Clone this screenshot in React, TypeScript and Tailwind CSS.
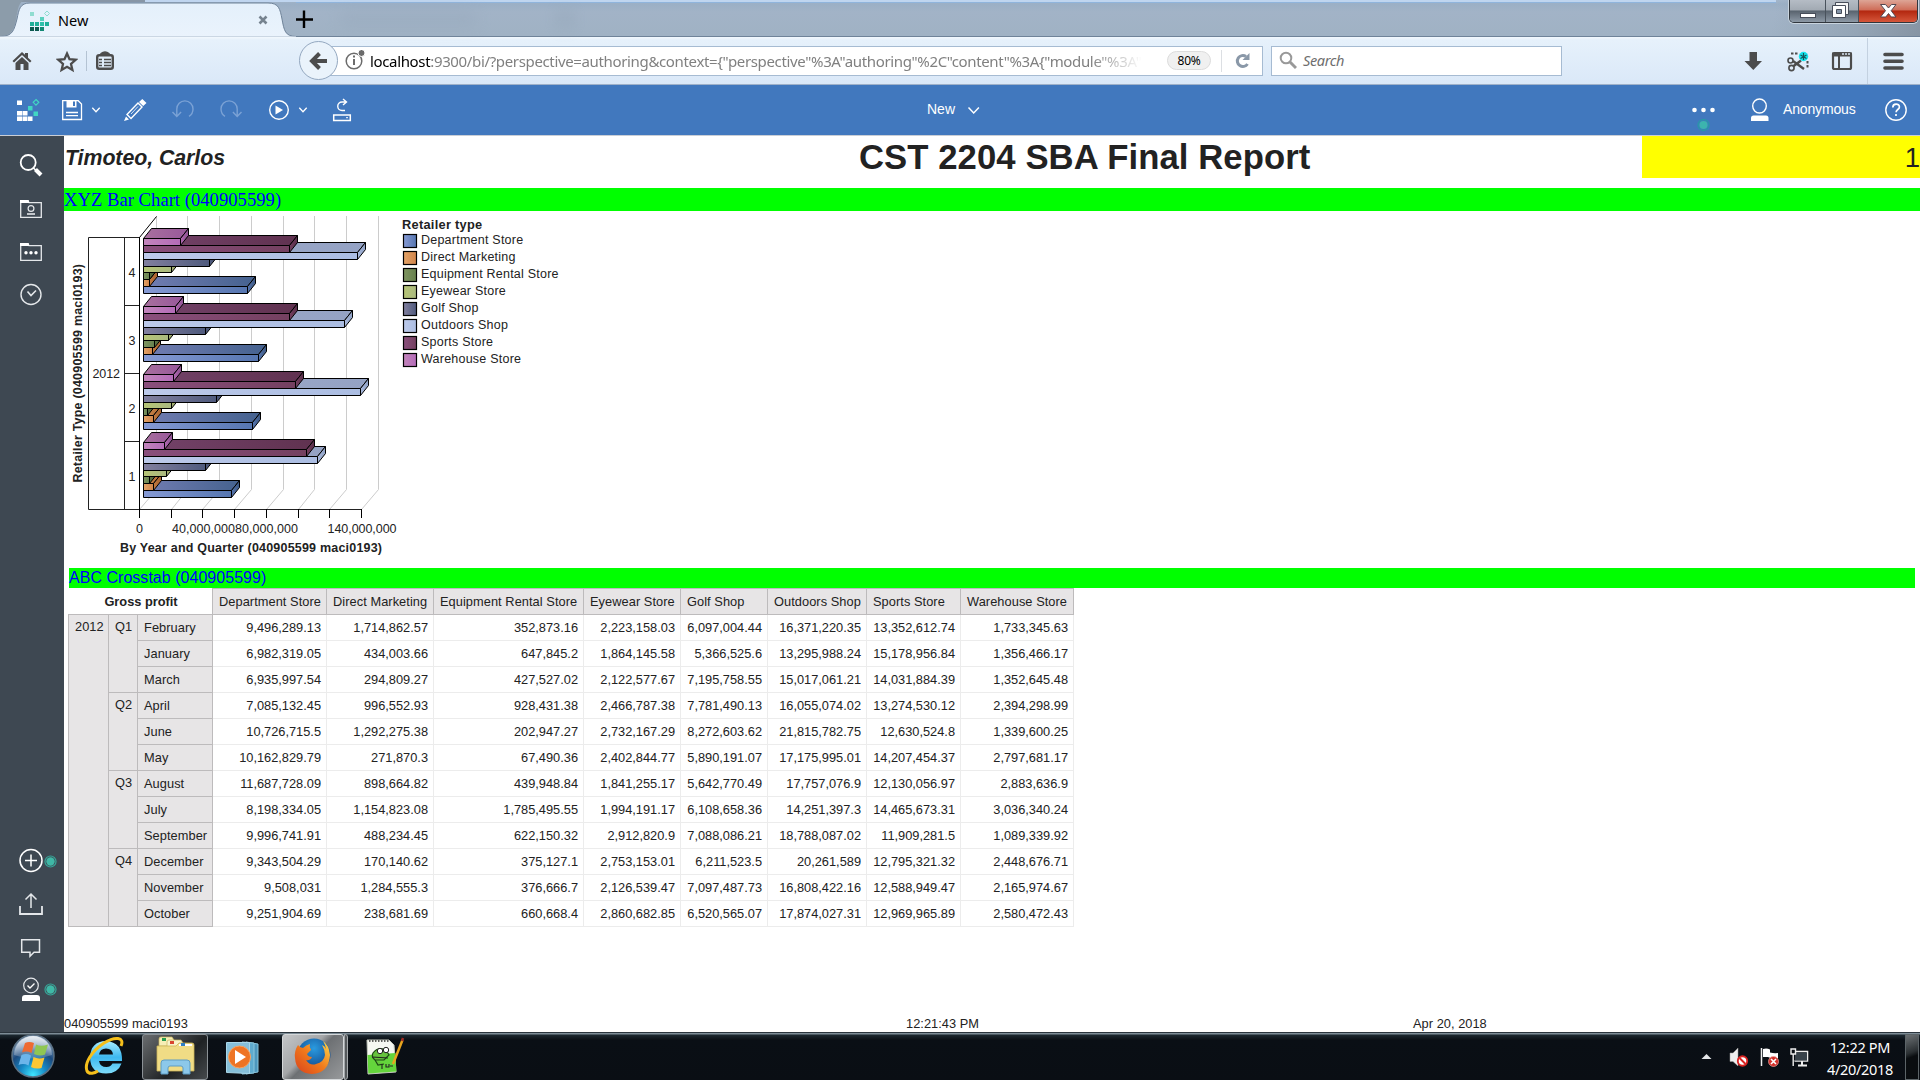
import React from "react";

type IcoProps = { x: number; y: number; w: number; h: number; className?: string; children: React.ReactNode };

function Ico({ x, y, w, h, className = "", children }: IcoProps) {
  return (
    <svg width={w} height={h} viewBox={`${x} ${y} ${w} ${h}`} fill="none" className={`block shrink-0 ${className}`}>
      {children}
    </svg>
  );
}

/* ---------- Browser chrome ---------- */

function TabStrip() {
  return (
    <div className="flex h-[37px] bg-[linear-gradient(#a3b5ca_0,#9bafc5_4px,#a2b3c7_12px,#a0b2c4_34px)]">
      <div className="relative h-[37px] w-[296px] shrink-0">
        <svg className="absolute inset-0" width="296" height="37" viewBox="0 0 296 37">
          <defs>
            <linearGradient id="tab" x1="0" y1="0" x2="0" y2="1">
              <stop offset="0" stopColor="#e4f0fb" />
              <stop offset="1" stopColor="#eaf3fc" />
            </linearGradient>
          </defs>
          <rect x="0" y="0" width="145" height="2" fill="#8796a6" />
          <path d="M0 0H24C17 4 18 12 15 24C12 34 8 36 0 36Z" fill="#8c9caa" />
          <path d="M0 37V36.500C13 36.500 14 30 17 19C19 9 20 3 30 3H268C279 3 280 9 282 19C284 30 285 36.500 296 36.500V37Z" fill="url(#tab)" stroke="#6f8399" />
          <rect x="145" y="0" width="151" height="2" fill="#bfd5ef" />
          <rect x="0" y="36.500" width="296" height="1" fill="#eaf3fc" />
        </svg>
        <div className="relative flex h-[37px] items-center pt-1 font-['Noto_Sans',sans-serif] text-[14px] text-black">
          <Ico x={30} y={9} w={20} h={22} className="ml-[30px]">
            <path d="M30 11h4v4h-4z" fill="#8fdcd0" />
            <path d="M47 10l2.500 2.500-2.500 2.500-2.500-2.500z" stroke="#8fdcd0" strokeWidth="1" />
            <path d="M40 16h4v4h-4z" fill="#5ad0bd" />
            <path d="M30 21h4v4h-4zM35 21h4v4h-4zM45 21h4v4h-4z" fill="#1fae98" />
            <path d="M40 21h4v4h-4z" fill="#2fc0aa" />
            <path d="M30 26h4v4h-4zM35 26h4v4h-4z" fill="#0c5a50" />
            <path d="M40 26h4v4h-4z" fill="#138873" />
          </Ico>
          <span className="ml-[8px] text-[14.500px]">New</span>
          <Ico x={258} y={15} w={10} h={10} className="ml-auto mr-[28px] mb-px">
            <path d="M259.500 16.500l7 7M266.500 16.500l-7 7" stroke="#76838f" strokeWidth="2.600" />
          </Ico>
        </div>
      </div>
      <div className="relative flex-1 border-b border-[#6f8399]">
        <div className="absolute left-0 top-0 h-[3px] w-[1480px] border-b border-[#8fb4dc] bg-[#bfd5ef]" />
        <svg className="absolute left-0 top-[10px]" width="20" height="20" viewBox="0 0 20 20">
          <path d="M8 0.500V18M-1 9.500H17" stroke="#000" strokeWidth="2.400" />
        </svg>
        <div className="absolute left-[44px] top-[11px] h-4 w-[136px] bg-[#8fa2b5] opacity-30 blur-sm" />
        <div className="absolute left-[263px] top-[11px] h-4 w-3 bg-[#8497aa] opacity-40 blur-sm" />
        <div className="absolute right-0 top-0 h-[36px] w-[160px] bg-[linear-gradient(100deg,transparent_10%,#8a99a8_60%,#6d7782)] opacity-50" />
        <div className="absolute right-[2px] top-0 flex h-[23px] w-[129px] overflow-hidden rounded-b-[5px] border border-t-0 border-[#30363d] shadow-[0_0_0_1px_#c9d4de]">
          <div className="h-full w-[36px] border-r border-[#49525c] bg-[linear-gradient(#b5bcc5_0,#a2aab3_45%,#59636e_50%,#8d99a6)]">
            <svg width="35" height="22" viewBox="0 0 35 22"><rect x="10.500" y="13.500" width="15" height="4" fill="#fff" stroke="#474d59" /></svg>
          </div>
          <div className="h-full w-[33px] border-r border-[#49525c] bg-[linear-gradient(#b5bcc5_0,#a2aab3_45%,#59636e_50%,#8d99a6)]">
            <svg width="32" height="22" viewBox="0 0 32 22">
              <path d="M9.500 2.500h13v12h-13z" fill="#f4f4f4" stroke="#474d59" />
              <path d="M6.500 5.500h13v12h-13z" fill="#fff" stroke="#474d59" />
              <path d="M10.500 9.500h5v4h-5z" fill="#8595a8" stroke="#474d59" />
            </svg>
          </div>
          <div className="h-full flex-1 bg-[linear-gradient(#dda596_0,#cf6d58_45%,#b3270f_50%,#d5563a)]">
            <svg width="59" height="22" viewBox="0 0 59 22">
              <path d="M21.500 4.500h5l3 3.500 3-3.500h4.500l-4.800 6.200 4.800 6.300h-4.800l-2.700-3.500-2.700 3.500h-5.300l5-6.300z" fill="#fff" stroke="#524750" />
            </svg>
          </div>
        </div>
      </div>
    </div>
  );
}

function NavBar() {
  return (
    <div className="flex h-[48px] items-center border-b border-[#9fb1c9] bg-[linear-gradient(#f2f8fd_0,#e6f1fb_3px,#dae8f8)] font-['Noto_Sans',sans-serif]">
      <Ico x={12} y={37} w={20} h={48} className="ml-[12px]">
        <path d="M22 52l-9.500 9 1.500 1.500 8-7.500 8 7.500 1.500-1.500-3.500-3.300V53h-3v1.700z" fill="#4c4c4c" />
        <path d="M15.500 63l6.500-6 6.500 6v7h-5v-6h-3v6h-5z" fill="#4c4c4c" />
      </Ico>
      <Ico x={56} y={37} w={22} h={48} className="ml-[24px]">
        <path d="M67 53.500l2.500 5.700 6.200.6-4.700 4.100 1.400 6.100-5.400-3.200-5.400 3.200 1.400-6.100-4.700-4.100 6.200-.6z" stroke="#4c4c4c" strokeWidth="2.300" />
      </Ico>
      <div className="ml-[8px] h-[20px] w-px bg-[#b4c3d3]" />
      <Ico x={95} y={37} w={20} h={48} className="ml-[8px]">
        <path d="M101 55v-1.500q4-3 8 0V55" fill="#4c4c4c" stroke="#4c4c4c" strokeWidth="1.500" />
        <rect x="97.200" y="55.200" width="15.600" height="13.600" rx="2" stroke="#4c4c4c" strokeWidth="2.400" />
        <path d="M99 59.500h3M104 59.500h7M99 62.500h3M104 62.500h7M99 65.500h3M104 65.500h7" stroke="#4c4c4c" strokeWidth="1.500" />
      </Ico>
      <div className="relative z-10 ml-[184px] flex size-[39px] shrink-0 items-center justify-center rounded-full border border-[#94a8c0] bg-[#eaf3fb]">
        <svg width="20" height="20" viewBox="0 0 20 20" fill="none"><path d="M18 10H4M10.500 2.500L3 10l7.500 7.500" stroke="#4c4c4c" strokeWidth="4" /></svg>
      </div>
      <div className="-ml-[10px] flex h-[30px] w-[935px] shrink-0 items-center border border-[#a6bbd2] bg-white">
        <Ico x={344} y={51} w={20} h={22} className="ml-[16px]">
          <circle cx="353" cy="62" r="7.800" stroke="#6b6b6b" strokeWidth="1.500" />
          <path d="M353 60v6M353 56.500v2" stroke="#6b6b6b" strokeWidth="2" />
          <circle cx="360.500" cy="54" r="3.500" fill="#6b6b6b" stroke="#fff" />
        </Ico>
        <div className="ml-[5px] w-[782px] overflow-hidden whitespace-nowrap pt-px text-[15px] tracking-[-0.350px] text-[#808080] [mask-image:linear-gradient(90deg,#000_720px,transparent_772px)]">
          <span className="text-black">localhost</span>{':9300/bi/?perspective=authoring&context={"perspective"%3A"authoring"%2C"content"%3A{"module"%3A"'}
        </div>
        <div className="ml-[15px] flex h-[19px] w-[44px] items-center justify-center rounded-full border border-[#dcdcdc] bg-[#f0f0f0] text-[12px] tracking-[-0.300px] text-black">80%</div>
        <div className="ml-[10px] h-[22px] w-px bg-[#dcdfe3]" />
        <Ico x={1233} y={53} w={18} h={18} className="ml-[11px]">
          <path d="M1246 57.500A5.500 5.500 0 1 0 1247.500 65" stroke="#8a98a8" strokeWidth="3" />
          <path d="M1249.500 54v7h-7z" fill="#8a98a8" />
        </Ico>
      </div>
      <div className="ml-[8px] flex h-[30px] w-[291px] shrink-0 items-center border border-[#a6bbd2] bg-white">
        <Ico x={1279} y={51} w={18} h={20} className="ml-[7px]">
          <circle cx="1286" cy="58" r="5.300" stroke="#999" strokeWidth="2" />
          <path d="M1290 62l6 6" stroke="#999" strokeWidth="3" />
        </Ico>
        <span className="ml-[6px] pt-px text-[14.500px] italic tracking-[-0.350px] text-[#6e6e6e]">Search</span>
      </div>
      <Ico x={1744} y={37} w={19} h={48} className="ml-[182px]">
        <path d="M1749.500 52h7.500v9h5l-8.700 9-8.800-9h5z" fill="#4c4c4c" />
      </Ico>
      <Ico x={1787} y={37} w={24} h={48} className="ml-[24px]">
        <circle cx="1790.500" cy="60.500" r="2.500" stroke="#4c4c4c" strokeWidth="1.600" />
        <circle cx="1791.500" cy="68" r="2.600" stroke="#4c4c4c" strokeWidth="1.600" />
        <path d="M1793 61l11 8M1793 66.500l8-6" stroke="#4c4c4c" strokeWidth="2.400" />
        <path d="M1791 53.500h7M1807.500 61v8" stroke="#4c4c4c" strokeWidth="2" strokeDasharray="2.500 1.500" />
        <circle cx="1803.500" cy="56.500" r="4.700" fill="#15e4ec" />
        <path d="M1803.500 53v7M1800.500 55l6 3.500M1806.500 55l-6 3.500" stroke="#14555a" strokeWidth="1.200" />
      </Ico>
      <Ico x={1831} y={37} w={22} h={48} className="ml-[20px]">
        <rect x="1833" y="53" width="18" height="16" rx="1.500" stroke="#4c4c4c" strokeWidth="2.200" />
        <path d="M1832 52.500h20v4h-20z" fill="#4c4c4c" />
        <path d="M1842 54h2M1845 54h2M1848 54h2" stroke="#d6e4f2" strokeWidth="1.300" />
        <path d="M1839 56v12" stroke="#4c4c4c" strokeWidth="2" />
      </Ico>
      <div className="ml-[14px] h-[46px] w-px bg-[#c3d1e0]" />
      <Ico x={1883} y={37} w={22} h={48} className="ml-[14px]">
        <path d="M1886 54.500h17M1886 61.300h17M1886 68h17" stroke="#4c4c4c" strokeWidth="3.600" strokeLinecap="round" />
      </Ico>
    </div>
  );
}

/* ---------- Cognos toolbar ---------- */

function AppBar() {
  return (
    <div className="flex h-[51px] items-start border-b border-[#c9ced6] bg-[#4178be] font-['Liberation_Sans',sans-serif] text-[14px] text-white">
      <div className="flex w-[927px] shrink-0">
        <Ico x={16} y={85} w={24} h={50} className="ml-[16px]">
          <path d="M17 100.500h5v4.500h-5zM17 111h5v4.500h-5zM17 116.500h5v4.500h-5zM22.500 111h5v4.500h-5zM22.500 116.500h5v4.500h-5zM28 116.500h4.500v4.500H28z" fill="#fff" />
          <path d="M28 106h4.500v4.500H28zM33.500 111.500H38v4.500h-4.500z" fill="#41d6c3" />
          <path d="M36 99.500l2.800 2.800-2.800 2.800-2.800-2.800z" stroke="#41d6c3" strokeWidth="1.200" />
        </Ico>
        <Ico x={61} y={85} w={22} h={50} className="ml-[21px]">
          <path d="M62.700 100.700h15.500l3.300 3.300v15.500H62.700z" stroke="#fff" strokeWidth="1.300" />
          <path d="M66.500 100.500h10v7h-10z" fill="#fff" />
          <path d="M73 101.500h2v4.500h-2z" fill="#4178be" />
          <path d="M66 112.500h12M66 115.700h12" stroke="#fff" strokeWidth="1.300" />
        </Ico>
        <Ico x={91} y={85} w={10} h={50} className="ml-[8px]"><path d="M92.300 107.800l3.700 3.900 3.700-3.900" stroke="#fff" strokeWidth="1.300" /></Ico>
        <Ico x={123} y={85} w={24} h={50} className="ml-[22px]">
          <path d="M127 114.500l11-11.500 4 4L131 118.500z" stroke="#fff" strokeWidth="1.400" />
          <path d="M139 102l3.300-3 4.200 4-3.300 3zM126 116.500l3 3-5 1.500z" fill="#fff" />
          <path d="M131 114l7-7.500" stroke="#fff" strokeWidth="0.800" />
        </Ico>
        <Ico x={171} y={85} w={24} h={50} className="ml-[24px]">
          <path d="M172.500 112l4.300 4.500 4.300-4.500M176.800 116V109a8 8 0 0 1 16.200 0c0 3-1 5.500-4 7.300" stroke="#7ba2d5" strokeWidth="1.400" />
        </Ico>
        <Ico x={219} y={85} w={24} h={50} className="ml-[24px]">
          <path d="M241.500 112l-4.300 4.500-4.300-4.500M237.200 116V109a8 8 0 0 0-16.200 0c0 3 1 5.500 4 7.300" stroke="#7ba2d5" strokeWidth="1.400" />
        </Ico>
        <Ico x={268} y={85} w={22} h={50} className="ml-[25px]">
          <circle cx="279" cy="110" r="9.300" stroke="#fff" strokeWidth="1.400" />
          <path d="M275.500 105.500v9l7.500-4.500z" fill="#fff" />
        </Ico>
        <Ico x={298} y={85} w={10} h={50} className="ml-[8px]"><path d="M299.300 107.800l3.700 3.900 3.700-3.900" stroke="#fff" strokeWidth="1.300" /></Ico>
        <Ico x={332} y={85} w={20} h={50} className="ml-[24px]">
          <path d="M345 110.500h-3a4 4 0 0 1 0-8.500h3.500M343 99l3.500 3-3.500 3" stroke="#fff" strokeWidth="1.400" />
          <path d="M333.700 115h16.600v5.500h-16.600z" stroke="#fff" strokeWidth="1.500" />
          <path d="M346 117.700h2" stroke="#fff" />
        </Ico>
      </div>
      <span className="leading-[49px]">New</span>
      <Ico x={967} y={85} w={14} h={50} className="ml-[12px]"><path d="M968.500 107.500l5.200 5.500 5.200-5.500" stroke="#fff" strokeWidth="1.500" /></Ico>
      <div className="ml-auto flex">
        <Ico x={1691} y={85} w={25} h={50}>
          <g fill="#fff"><circle cx="1694.500" cy="110" r="2.300" /><circle cx="1703.500" cy="110" r="2.300" /><circle cx="1712.500" cy="110" r="2.300" /></g>
          <circle cx="1703.500" cy="125" r="5.500" stroke="#2798a8" strokeWidth="1.300" />
          <circle cx="1703.500" cy="125" r="4.100" fill="#3cb4ae" />
        </Ico>
        <Ico x={1749} y={85} w={22} h={50} className="ml-[33px]">
          <ellipse cx="1759.500" cy="106" rx="6.800" ry="7" stroke="#fff" strokeWidth="1.400" />
          <path d="M1751 121v-3q0-2.500 2.500-2.500h12.500q2.500 0 2.500 2.500v3z" fill="#fff" />
        </Ico>
        <span className="ml-[12px] w-[73px] whitespace-nowrap text-[14px] leading-[49px] tracking-[-0.150px]">Anonymous</span>
        <Ico x={1884} y={85} w={24} h={50} className="ml-[28px] mr-[12px]">
          <circle cx="1896" cy="110" r="10.200" stroke="#fff" strokeWidth="1.400" />
          <path d="M1892.800 107.500c0-4.500 6.600-4.300 6.600-.6 0 2.600-3.300 2.600-3.300 5.300M1896 114v2" stroke="#fff" strokeWidth="1.700" />
        </Ico>
      </div>
    </div>
  );
}

function Teal() {
  return (
    <svg width="13" height="13" viewBox="0 0 13 13" fill="none" className="block shrink-0">
      <circle cx="6.500" cy="6.500" r="5.500" stroke="#36a598" strokeWidth="1.200" />
      <circle cx="6.500" cy="6.500" r="4.200" fill="#3fb8a6" />
    </svg>
  );
}

function SideBar() {
  return (
    <div className="flex w-[64px] shrink-0 flex-col items-start bg-[#3e4852]">
      <Ico x={18} y={152} w={26} h={26} className="ml-[18px] mt-[16px]">
        <circle cx="28.200" cy="162.500" r="7.500" stroke="#fff" strokeWidth="1.800" />
        <path d="M35.500 169.500l5.500 5.500" stroke="#fff" strokeWidth="4" />
        <path d="M33 167.500l3 3" stroke="#fff" strokeWidth="1.500" />
      </Ico>
      <Ico x={18} y={198} w={26} h={22} className="ml-[18px] mt-[20px]">
        <path d="M20.700 200.700v16.600h20.600v-14.600H29l-1-2z" stroke="#e4e7ea" strokeWidth="1.300" />
        <path d="M20 200h8.500l1 3H20z" fill="#fff" />
        <circle cx="31" cy="208.500" r="2.900" stroke="#e4e7ea" strokeWidth="1.200" />
        <path d="M27 214h8" stroke="#e4e7ea" strokeWidth="1.600" />
      </Ico>
      <Ico x={18} y={241} w={26} h={22} className="ml-[18px] mt-[21px]">
        <path d="M20.700 243.700v16.600h20.600v-14.600H29l-1-2z" stroke="#e4e7ea" strokeWidth="1.300" />
        <path d="M20 243h8.500l1 3H20z" fill="#fff" />
        <g fill="#fff"><circle cx="26" cy="252.700" r="1.700" /><circle cx="31" cy="252.700" r="1.700" /><circle cx="36" cy="252.700" r="1.700" /></g>
      </Ico>
      <Ico x={18} y={282} w={26} h={26} className="ml-[18px] mt-[19px]">
        <circle cx="31" cy="294.500" r="10" stroke="#e4e7ea" strokeWidth="1.400" />
        <path d="M27.500 291.500l3.500 4 5-5" stroke="#e4e7ea" strokeWidth="1.600" />
      </Ico>
      <div className="mt-auto flex items-center pl-[18px]">
        <Ico x={18} y={848} w={26} h={26}>
          <circle cx="31" cy="860.500" r="11" stroke="#fff" strokeWidth="1.500" />
          <path d="M31 854.500v12M25 860.500h12" stroke="#fff" strokeWidth="1.500" />
        </Ico>
        <Teal />
      </div>
      <Ico x={18} y={891} w={26} h={26} className="ml-[18px] mt-[17px]">
        <path d="M20 906v8h22v-8" stroke="#e4e7ea" strokeWidth="1.800" />
        <path d="M31 908v-14M25.500 899.500L31 894l5.500 5.500" stroke="#e4e7ea" strokeWidth="1.500" />
      </Ico>
      <Ico x={18} y={937} w={26} h={22} className="ml-[18px] mt-[20px]">
        <path d="M21.700 939.700h17.800v12.600h-5.500l-4 4v-4h-8.300z" stroke="#e4e7ea" strokeWidth="1.500" />
      </Ico>
      <div className="mb-[29px] mt-[17px] flex items-center pl-[18px]">
        <Ico x={18} y={976} w={26} h={27}>
          <circle cx="31" cy="985.500" r="7.300" stroke="#e4e7ea" strokeWidth="1.200" />
          <path d="M27.500 985.500l2.500 2.500 4.500-4.500" stroke="#fff" strokeWidth="1.400" />
          <path d="M22 1001v-3q0-3 3-3h12q3 0 3 3v3z" fill="#fff" />
        </Ico>
        <Teal />
      </div>
    </div>
  );
}

/* ---------- Chart ---------- */

type Series = { id: string; name: string; front: [string, string]; top: [string, string]; side: [string, string]; y: number; h: number };

const series: Series[] = [
  { id: "dept", name: "Department Store", front: ["#869ad4", "#5676b0"], top: ["#727db2", "#45628f"], side: ["#5676b0", "#3b5680"], y: 286.5, h: 7 },
  { id: "direct", name: "Direct Marketing", front: ["#e4a468", "#d0844a"], top: ["#cf8a4e", "#b06a34"], side: ["#c07840", "#a8622e"], y: 279.5, h: 7 },
  { id: "equip", name: "Equipment Rental Store", front: ["#7f9460", "#66804e"], top: ["#6a8050", "#4a6036"], side: ["#5a7044", "#485e34"], y: 272.5, h: 7 },
  { id: "eye", name: "Eyewear Store", front: ["#b6c476", "#abba80"], top: ["#a0ae68", "#8c9a60"], side: ["#a4b070", "#8f9c66"], y: 266.5, h: 6 },
  { id: "golf", name: "Golf Shop", front: ["#82809f", "#4f5a7d"], top: ["#6a6a8a", "#44506e"], side: ["#4f5a7d", "#414b68"], y: 259.5, h: 7 },
  { id: "outdoor", name: "Outdoors Shop", front: ["#bdcaea", "#abbde2"], top: ["#9fabc8", "#94a2c4"], side: ["#a9b9dc", "#8ea0c4"], y: 252.5, h: 7 },
  { id: "sports", name: "Sports Store", front: ["#8a4f7c", "#744060"], top: ["#74436a", "#603250"], side: ["#744060", "#572c48"], y: 245.5, h: 7 },
  { id: "ware", name: "Warehouse Store", front: ["#c285bb", "#b46bb8"], top: ["#a8709e", "#98589a"], side: ["#b068b0", "#8c5090"], y: 238.5, h: 7 },
];

const groups: { label: string; dy: number; ends: number[] }[] = [
  { label: "1", dy: 204, ends: [231.5, 153.5, 149.5, 166.5, 205.5, 317.5, 306.5, 164.5] },
  { label: "2", dy: 136, ends: [252.5, 153.5, 147.5, 171.5, 216.5, 360.5, 295.5, 173.5] },
  { label: "3", dy: 68, ends: [258.5, 152.5, 154.5, 168.5, 205.5, 344.5, 289.5, 175.5] },
  { label: "4", dy: 0, ends: [247.5, 149.5, 149.5, 171.5, 209.5, 357.5, 289.5, 180.5] },
];

const backX = [156.5, 187.5, 219.5, 251.5, 283.5, 314.5, 346.5, 378.5];
const tickX = [139.5, 171.5, 202.5, 234.5, 266.5, 298.5, 329.5, 361.5];

function BarChart() {
  const x0 = 143.5;
  return (
    <svg width="330" height="357" viewBox="64 211 330 357" overflow="visible" className="block shrink-0 font-['Liberation_Sans',sans-serif]" fontSize="12.500" fill="#222">
      <defs>
        {series.map((s) => (
          <React.Fragment key={s.id}>
            <linearGradient id={`${s.id}-f`}><stop offset="0" stopColor={s.front[0]} /><stop offset="1" stopColor={s.front[1]} /></linearGradient>
            <linearGradient id={`${s.id}-t`}><stop offset="0" stopColor={s.top[0]} /><stop offset="1" stopColor={s.top[1]} /></linearGradient>
            <linearGradient id={`${s.id}-s`}><stop offset="0" stopColor={s.side[0]} /><stop offset="1" stopColor={s.side[1]} /></linearGradient>
          </React.Fragment>
        ))}
      </defs>
      {backX.map((x, i) => (
        <path key={x} d={`M${x} 216V489.500L${tickX[i]} 509.500`} stroke="#ccc" fill="none" />
      ))}
      <path d="M139.500 237.500L156.500 216.500" stroke="#000" />
      <path d="M139.500 237.500H88.500V509.500H361.500M124.500 237.500V509.500M124.500 305.500H139.500M124.500 373.500H139.500M124.500 441.500H139.500" stroke="#222" fill="none" />
      <path d="M139.500 237V509.500" stroke="#000" />
      {tickX.map((x) => <path key={x} d={`M${x} 509V518`} stroke="#000" />)}
      {groups.map((g) =>
        series.map((s, i) => {
          const y = s.y + g.dy;
          const e = g.ends[i];
          return (
            <g key={g.label + s.id} stroke="#000" strokeWidth="1" strokeLinejoin="round">
              <path d={`M${x0} ${y}l8 -10H${e + 8}L${e} ${y}Z`} fill={`url(#${s.id}-t)`} />
              <path d={`M${e} ${y}l8 -10v${s.h}L${e} ${y + s.h}Z`} fill={`url(#${s.id}-s)`} />
              <path d={`M${x0} ${y}H${e}v${s.h}H${x0}Z`} fill={`url(#${s.id}-f)`} />
            </g>
          );
        }),
      )}
      {groups.map((g) => <text key={g.label} x="132" y={276.5 + g.dy} textAnchor="middle">{g.label}</text>)}
      <text x="92.500" y="378" textLength="27.500">2012</text>
      <text x="139.500" y="533" textAnchor="middle">0</text>
      <text x="172" y="533" textLength="63">40,000,000</text>
      <text x="235" y="533" textLength="63">80,000,000</text>
      <text x="327.500" y="533" textLength="69">140,000,000</text>
      <text x="120" y="552" textLength="262" fontWeight="bold">By Year and Quarter (040905599 maci0193)</text>
      <text transform="translate(82 482.500) rotate(-90)" textLength="218.500" fontWeight="bold">Retailer Type (040905599 maci0193)</text>
    </svg>
  );
}

function Legend() {
  return (
    <div className="ml-[8px] mt-[6px] text-[12.500px] text-[#222]">
      <div className="h-[15px] text-[12.800px] font-bold leading-[15px] tracking-[0.280px]">Retailer type</div>
      {series.map((s) => (
        <div key={s.id} className="flex h-[17px] items-center">
          <svg width="16" height="16" viewBox="0 0 16 16" className="block"><rect x="1.500" y="1.500" width="13" height="13" fill={`url(#${s.id}-f)`} stroke="#000" strokeWidth="1.200" /></svg>
          <span className="ml-[3px] whitespace-nowrap leading-[17px] tracking-[0.230px]">{s.name}</span>
        </div>
      ))}
    </div>
  );
}

/* ---------- Crosstab ---------- */

const columns = ["Department Store", "Direct Marketing", "Equipment Rental Store", "Eyewear Store", "Golf Shop", "Outdoors Shop", "Sports Store", "Warehouse Store"];
const widths = [40, 29, 75, 114, 107, 150, 97, 87, 99, 94, 113];

const rows: [string, string[]][] = [
  ["February", ["9,496,289.13", "1,714,862.57", "352,873.16", "2,223,158.03", "6,097,004.44", "16,371,220.35", "13,352,612.74", "1,733,345.63"]],
  ["January", ["6,982,319.05", "434,003.66", "647,845.2", "1,864,145.58", "5,366,525.6", "13,295,988.24", "15,178,956.84", "1,356,466.17"]],
  ["March", ["6,935,997.54", "294,809.27", "427,527.02", "2,122,577.67", "7,195,758.55", "15,017,061.21", "14,031,884.39", "1,352,645.48"]],
  ["April", ["7,085,132.45", "996,552.93", "928,431.38", "2,466,787.38", "7,781,490.13", "16,055,074.02", "13,274,530.12", "2,394,298.99"]],
  ["June", ["10,726,715.5", "1,292,275.38", "202,947.27", "2,732,167.29", "8,272,603.62", "21,815,782.75", "12,630,524.8", "1,339,600.25"]],
  ["May", ["10,162,829.79", "271,870.3", "67,490.36", "2,402,844.77", "5,890,191.07", "17,175,995.01", "14,207,454.37", "2,797,681.17"]],
  ["August", ["11,687,728.09", "898,664.82", "439,948.84", "1,841,255.17", "5,642,770.49", "17,757,076.9", "12,130,056.97", "2,883,636.9"]],
  ["July", ["8,198,334.05", "1,154,823.08", "1,785,495.55", "1,994,191.17", "6,108,658.36", "14,251,397.3", "14,465,673.31", "3,036,340.24"]],
  ["September", ["9,996,741.91", "488,234.45", "622,150.32", "2,912,820.9", "7,088,086.21", "18,788,087.02", "11,909,281.5", "1,089,339.92"]],
  ["December", ["9,343,504.29", "170,140.62", "375,127.1", "2,753,153.01", "6,211,523.5", "20,261,589", "12,795,321.32", "2,448,676.71"]],
  ["November", ["9,508,031", "1,284,555.3", "376,666.7", "2,126,539.47", "7,097,487.73", "16,808,422.16", "12,588,949.47", "2,165,974.67"]],
  ["October", ["9,251,904.69", "238,681.69", "660,668.4", "2,860,682.85", "6,520,565.07", "17,874,027.31", "12,969,965.89", "2,580,472.43"]],
];

const head = "border-b border-r border-[#bdbbbc] bg-[#e7e5e6] p-0 pl-[6px] text-left font-normal whitespace-nowrap tracking-[0.060px]";

function Crosstab() {
  return (
    <table className="ml-[4px] w-[1006px] table-fixed border-separate border-spacing-0 text-[12.800px] leading-[16px] text-[#222]">
      <colgroup>{widths.map((w, i) => <col key={i} style={{ width: i === 0 ? w + 1 : w }} />)}</colgroup>
      <tbody>
        <tr className="h-[27px]">
          <th colSpan={3} className="border-b border-r border-[#bdbbbc] p-0 pl-[2px] pt-px font-bold">Gross profit</th>
          {columns.map((c) => <th key={c} className={`${head} border-t`}>{c}</th>)}
        </tr>
        {rows.map(([month, vals], r) => (
          <tr key={month} className="h-[26px]">
            {r === 0 && <th rowSpan={12} className={`${head} border-l pt-[4px] align-top`}>2012</th>}
            {r % 3 === 0 && <th rowSpan={3} className={`${head} pt-[4px] align-top`}>{`Q${r / 3 + 1}`}</th>}
            <th className={head}>{month}</th>
            {vals.map((v, i) => <td key={i} className="border-b border-r border-[#ececec] p-0 pr-[5px] text-right">{v}</td>)}
          </tr>
        ))}
      </tbody>
    </table>
  );
}

function Report() {
  return (
    <div className="flex flex-1 flex-col bg-white font-['Liberation_Sans',sans-serif] text-[#222]">
      <div className="grid h-[52px] grid-cols-[795px_783px_278px] items-start">
        <div className="pl-px pt-[9px] text-[21.330px] font-bold italic leading-[26px] tracking-[-0.050px]">Timoteo, Carlos</div>
        <div className="whitespace-nowrap text-[34.670px] font-bold leading-[43px] tracking-[0.080px]">CST 2204 SBA Final Report</div>
        <div className="h-[42px] bg-[#ffff00] text-right text-[27.500px] leading-[44px]">1</div>
      </div>
      <div className="h-[23px] whitespace-nowrap bg-[#00ff00] font-['Liberation_Serif',serif] text-[18.670px] leading-[24px] text-[#0000ff]">XYZ Bar Chart (040905599)</div>
      <div className="flex h-[357px]">
        <BarChart />
        <Legend />
      </div>
      <div className="ml-[5px] mr-[5px] h-[20px] bg-[#00ff00] text-[16px] leading-[19px] tracking-[0.030px] text-[#0000ff]">ABC Crosstab (040905599)</div>
      <Crosstab />
      <div className="mt-auto grid h-[17px] grid-cols-[842px_507px_1fr] whitespace-nowrap text-[12.800px] leading-[17px] tracking-[0.040px]">
        <span>040905599 maci0193</span>
        <span>12:21:43 PM</span>
        <span>Apr 20, 2018</span>
      </div>
    </div>
  );
}

/* ---------- Taskbar ---------- */

function TaskBar() {
  return (
    <div className="flex h-[48px] items-center border-t border-[#2a343c] bg-[linear-gradient(#7d8c96_0,#7d8c96_1px,#1c2830_2px,#0a0f15_7px,#0a0e14)] font-['Noto_Sans',sans-serif]">
      <Ico x={10} y={1033} w={46} h={47} className="ml-[10px]">
        <defs>
          <radialGradient id="orb" cx="0.5" cy="0.95" r="0.9"><stop offset="0" stopColor="#3fe6ff" /><stop offset="0.35" stopColor="#1687c4" /><stop offset="0.65" stopColor="#1c4a7e" /><stop offset="1" stopColor="#8fa9c4" /></radialGradient>
          <linearGradient id="orbshine" x1="0" y1="0" x2="0" y2="1"><stop offset="0" stopColor="#fff" stopOpacity="0.8" /><stop offset="1" stopColor="#fff" stopOpacity="0.15" /></linearGradient>
        </defs>
        <circle cx="33" cy="1056" r="21" fill="url(#orb)" stroke="#5b7184" strokeWidth="1.500" />
        <path d="M14 1055a19 19 0 0 1 38 0q-19 7-38 0z" fill="url(#orbshine)" />
        <path d="M25 1043q4-2 9 0l-2.500 10q-5-2.500-9.500-.5z" fill="#ee6a31" />
        <path d="M36 1044.500q5 2.500 12 0l-3 10q-6 2-11-.5z" fill="#8fc653" />
        <path d="M21.500 1055q5-2 9.500.5l-2.500 10q-5-2.500-10-.5z" fill="#6cb5ea" />
        <path d="M33.500 1057q5 2.500 11 .5l-3 10.500q-6 1.500-10.500-1z" fill="#fbc735" />
      </Ico>
      <Ico x={84} y={1033} w={42} h={47} className="ml-[28px]">
        <defs><linearGradient id="ie" x1="0" y1="0" x2="0" y2="1"><stop offset="0" stopColor="#a7ecff" /><stop offset="0.5" stopColor="#3db8f0" /><stop offset="1" stopColor="#7fdcfb" /></linearGradient></defs>
        <path d="M122 1061H99q1 6 7.500 6 4 0 6-3.500h9q-3.500 10-15.500 10-15.500 0-16-16 .5-16 16-16.500 16.500 1 16 20zM99 1054.500h14q-.5-6-7-6-6 0-7 6z" fill="url(#ie)" />
        <path d="M121 1046c4-9-6-10-17-3-12 8-20 20-17 28 2 4 8 2 11 0" stroke="#f5bf1b" strokeWidth="3" />
      </Ico>
      <div className="ml-[16px] flex h-[46px] w-[66px] items-center justify-center rounded-[3px] border border-[#8b9196] bg-[linear-gradient(135deg,#6a6d70_0,#3f4244_35%,#1f2224_60%,#45494c)]">
        <svg width="42" height="42" viewBox="0 0 42 42">
          <path d="M5 3q0-2 2-2h11l2 3v6H5z" fill="#f7eeb5" stroke="#c9b55f" strokeWidth="0.700" />
          <path d="M13 6q0-2 2-2h12l2 3v6H13z" fill="#f9f3c8" stroke="#c9b55f" strokeWidth="0.700" />
          <path d="M8 2h4v3H8z" fill="#2a9d4f" /><path d="M16 5h4v3h-4z" fill="#d9462f" />
          <path d="M3 10h19l3-3h13q2 0 2 2v26H3z" fill="#f0dc85" stroke="#cbb458" strokeWidth="0.800" />
          <path d="M25 8h13v2H25z" fill="#fff" /><path d="M27 7h4v3h-4z" fill="#2f7fc4" />
          <path d="M7 38V27q0-3 3-3h23q3 0 3 3v11h-7v-6q0-2-2-2H16q-2 0-2 2v6z" fill="#8cc8ea" stroke="#5d9cc4" />
        </svg>
      </div>
      <Ico x={225} y={1033} w={36} h={47} className="ml-[17px]">
        <path d="M246 1042l12 2v28l-12 2z" fill="#4d97bd" stroke="#8cc6dd" />
        <path d="M242 1042l12 1v30l-12 1z" fill="#5fabcf" stroke="#8cc6dd" />
        <path d="M226.500 1042.500h23v31l-23-1z" fill="#86bfd9" stroke="#a9d6e8" />
        <circle cx="239.500" cy="1057" r="11" fill="#ee7424" stroke="#f7a464" />
        <path d="M235 1050v14l11-7z" fill="#fff" />
      </Ico>
      <div className="ml-[21px] flex h-[46px] w-[62px] items-center justify-center rounded-[3px] border border-[#d4d7d9] bg-[linear-gradient(135deg,#c4c6c8_0,#a4a6a8_40%,#6d7073_50%,#97999b)]">
        <svg width="40" height="40" viewBox="0 0 40 40">
          <defs>
            <radialGradient id="fx" cx="0.5" cy="0.3" r="0.8"><stop offset="0" stopColor="#2a9be0" /><stop offset="1" stopColor="#0d3478" /></radialGradient>
            <linearGradient id="fox" x1="0" y1="1" x2="1" y2="0"><stop offset="0" stopColor="#d9401c" /><stop offset="0.5" stopColor="#f07a1c" /><stop offset="1" stopColor="#ffd94a" /></linearGradient>
          </defs>
          <circle cx="21" cy="18" r="16.500" fill="url(#fx)" />
          <path d="M5 8q2 3 5 3 3-3 7-4-1 3 1 6l-4 4q1 3 5 3-2 4-6 3 4 6 10 4 8-2 9-9 0-5-3-10 3 1 4 4-1-5-3-8 6 4 7 14-1 18-18 19Q3 36 2 21 1 14 5 8z" fill="url(#fox)" />
        </svg>
      </div>
      <div className="h-[46px] w-[4px] rounded-r-[3px] border border-[#a4a8ab] bg-[#55595c]" />
      <Ico x={365} y={1033} w={42} h={47} className="ml-[17px]">
        <path d="M367 1040h22l5 5 2 27-28 2z" fill="#f5f7f2" stroke="#c5cabf" />
        <path d="M367.500 1055l28-2 .8 18.500-28 2z" fill="#64d53c" />
        <path d="M369 1041h20" stroke="#333" strokeWidth="1.500" strokeDasharray="1.500 1.500" />
        <path d="M373 1053q5-7 13-3l3 5-5 5h-9q-4-3-2-7zM375 1060l3 5 6-1" fill="#66c23e" stroke="#1c4a14" strokeWidth="1.200" />
        <circle cx="380" cy="1051" r="2.700" fill="#fff" stroke="#222" /><circle cx="386" cy="1050" r="2.700" fill="#fff" stroke="#222" />
        <path d="M372 1057l16 1M382 1064v5M386 1064v3h3v-3M390 1066h3" stroke="#222" strokeWidth="1.100" />
        <path d="M402.500 1040l-9.500 24" stroke="#e8a51e" strokeWidth="2.500" />
        <path d="M403 1038l-1 3" stroke="#a02c25" strokeWidth="2.500" />
      </Ico>
      <div className="ml-auto flex items-center">
        <Ico x={1701} y={1033} w={11} h={47}><path d="M1701.500 1059l5-5 5 5z" fill="#e4e6e8" /></Ico>
        <Ico x={1729} y={1033} w={21} h={47} className="ml-[17px]">
          <path d="M1730 1053h3l5-5v18l-5-4.500h-3z" fill="#eee" stroke="#999" strokeWidth="0.500" />
          <circle cx="1742.500" cy="1061" r="4.700" fill="#fff" stroke="#d92220" strokeWidth="1.900" />
          <path d="M1739.500 1058l6 6" stroke="#d92220" strokeWidth="1.900" />
        </Ico>
        <Ico x={1759} y={1033} w={21} h={47} className="ml-[9px]">
          <path d="M1761.500 1048v18" stroke="#eee" strokeWidth="1.500" />
          <path d="M1763 1049q4-1 7 .5v3q4 1 8 .5v5q-7 1-10-1h-5z" fill="#fff" />
          <circle cx="1773.500" cy="1061.500" r="5" fill="#d3302a" stroke="#f2a29e" strokeWidth="0.700" />
          <path d="M1771 1059l5 5M1776 1059l-5 5" stroke="#fff" strokeWidth="1.600" />
        </Ico>
        <Ico x={1789} y={1033} w={21} h={47} className="ml-[9px]">
          <path d="M1796 1051.500h11.500v9.500h-13" stroke="#eee" strokeWidth="1.500" />
          <path d="M1795 1052.500h12v8h-12z" fill="#38424a" />
          <path d="M1798 1065.500h9M1802 1061v4" stroke="#eee" strokeWidth="2" />
          <path d="M1791 1049h4.500v5H1791zM1793.200 1054v12" stroke="#eee" strokeWidth="1.400" />
        </Ico>
        <div className="ml-[12px] w-[76px] pt-[2px] text-center text-[14.500px] leading-[22px] tracking-[-0.300px] text-white">
          <div>12:22 PM</div>
          <div>4/20/2018</div>
        </div>
        <div className="ml-[7px] mr-px h-[46px] w-[14px] border border-[#5c6468] bg-[linear-gradient(160deg,#6c7174,#2a2f32_40%,#0a0d10_50%)]" />
      </div>
    </div>
  );
}

export default function App() {
  return (
    <div className="flex h-[1080px] w-[1920px] flex-col overflow-hidden bg-white">
      <TabStrip />
      <NavBar />
      <AppBar />
      <div className="flex h-[896px] shrink-0">
        <SideBar />
        <Report />
      </div>
      <TaskBar />
    </div>
  );
}
